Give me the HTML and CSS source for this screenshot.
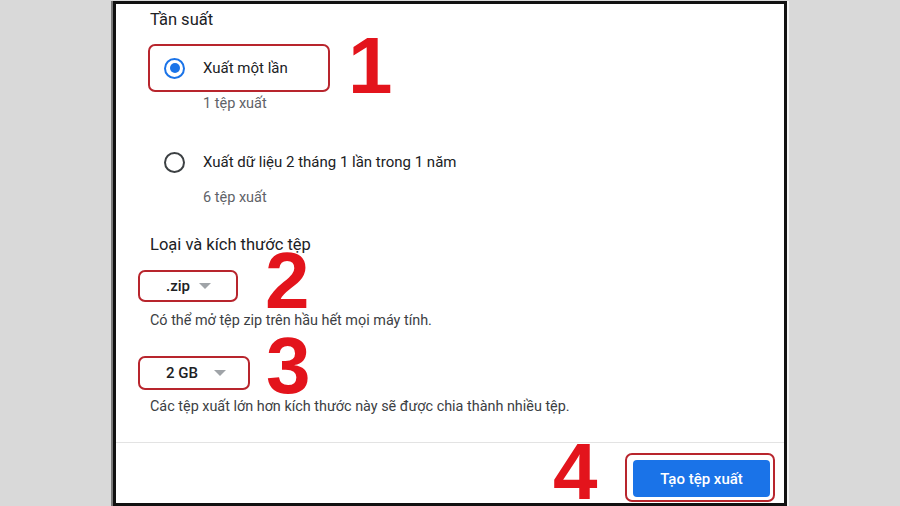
FILE: index.html
```html
<!DOCTYPE html>
<html lang="vi">
<head>
<meta charset="utf-8">
<link rel="stylesheet" href="styles.css">
</head>
<body>
<div class="panel">
  <div class="content">
    <div class="title t1">Tần suất</div>
    <div class="mark option-box">
      <span class="radio checked"></span>
      <span class="opt-label">Xuất một lần</span>
    </div>
    <div class="sub s1">1 tệp xuất</div>
    <div class="option o2">
      <span class="radio"></span>
      <span class="opt-label">Xuất dữ liệu 2 tháng 1 lần trong 1 năm</span>
    </div>
    <div class="sub s2">6 tệp xuất</div>
    <div class="title t2">Loại và kích thước tệp</div>
    <div class="mark select sel-zip"><span class="sel-text">.zip</span><span class="caret"></span></div>
    <div class="desc d1">Có thể mở tệp zip trên hầu hết mọi máy tính.</div>
    <div class="mark select sel-size"><span class="sel-text">2 GB</span><span class="caret"></span></div>
    <div class="desc d2">Các tệp xuất lớn hơn kích thước này sẽ được chia thành nhiều tệp.</div>
  </div>
  <div class="separator"></div>
  <div class="footer">
    <div class="mark btn-box"><button class="btn">Tạo tệp xuất</button></div>
  </div>
</div>
<span class="num n1">1</span>
<span class="num n2">2</span>
<span class="num n3">3</span>
<span class="num n4">4</span>
</body>
</html>
```
FILE: styles.css
```css
html, body {
  margin: 0;
  padding: 0;
}
body {
  width: 900px;
  height: 506px;
  background: #d9d9d9;
  position: relative;
  overflow: hidden;
  font-family: Roboto, "Liberation Sans", Arial, sans-serif;
  color: #202124;
}
.panel {
  box-sizing: border-box;
  margin-left: 113px;
  margin-top: 1px;
  width: 674px;
  height: 505px;
  border: 3px solid #111;
  background: #fff;
  box-shadow: -2px 0 0 #7a7a7a, 2px 0 0 #f2f2f2;
  display: flex;
  flex-direction: column;
}
.content {
  padding-left: 34px;
  display: flex;
  flex-direction: column;
  align-items: flex-start;
}
.title {
  font-size: 16.5px;
  line-height: 20px;
  height: 20px;
  color: #202124;
}
.t1 { margin-top: 6px; }
.t2 { margin-top: 27px; }
.mark {
  box-sizing: border-box;
  border: 2px solid #b8252d;
  border-radius: 7px;
}
.option-box {
  margin-top: 14px;
  margin-left: -2px;
  width: 182px;
  height: 48px;
  display: flex;
  align-items: center;
  padding-left: 14px;
}
.option {
  display: flex;
  align-items: center;
  height: 24px;
  padding-left: 14px;
}
.o2 { margin-top: 36px; }
.radio {
  box-sizing: border-box;
  width: 21px;
  height: 21px;
  border: 2px solid #3c4043;
  border-radius: 50%;
  flex: none;
  display: flex;
  align-items: center;
  justify-content: center;
}
.radio.checked {
  border-color: #1a73e8;
}
.radio.checked::after {
  content: "";
  width: 10px;
  height: 10px;
  border-radius: 50%;
  background: #1a73e8;
}
.opt-label {
  margin-left: 18px;
  font-size: 15px;
  color: #202124;
}
.sub {
  font-size: 14.5px;
  line-height: 20px;
  height: 20px;
  padding-left: 53px;
  color: #5f6368;
}
.s1 { margin-top: 2px; }
.s2 { margin-top: 14px; }
.select {
  display: flex;
  align-items: center;
  margin-left: -12px;
}
.sel-zip {
  margin-top: 15px;
  width: 100px;
  height: 32px;
}
.sel-size {
  margin-top: 25px;
  width: 112px;
  height: 34px;
}
.sel-text {
  margin-left: 26px;
  font-size: 15px;
  font-weight: 500;
  color: #202124;
}
.caret {
  width: 0;
  height: 0;
  border-left: 6px solid transparent;
  border-right: 6px solid transparent;
  border-top: 6px solid #a0a4a8;
}
.sel-zip .caret { margin-left: 9px; }
.sel-size .caret { margin-left: 16px; }
.desc {
  font-size: 14.4px;
  line-height: 20px;
  height: 20px;
  color: #3c4043;
}
.d1 { margin-top: 9px; }
.d2 { margin-top: 7px; }
.separator {
  margin-top: 25px;
  height: 1px;
  background: #e3e3e3;
}
.footer {
  flex: 1;
  display: flex;
  justify-content: flex-end;
  align-items: flex-start;
  padding-top: 10px;
  padding-right: 9px;
}
.btn-box {
  width: 150px;
  height: 49px;
  padding: 5px 3px 3px 6px;
}
.btn {
  display: block;
  width: 137px;
  height: 37px;
  border: none;
  border-radius: 4px;
  background: #1a73e8;
  color: #fff;
  font-family: Roboto, "Liberation Sans", Arial, sans-serif;
  font-size: 15px;
  font-weight: 500;
  padding: 0;
}
.num {
  position: absolute;
  font-family: "Liberation Sans", Arial, sans-serif;
  font-weight: 700;
  font-size: 80px;
  line-height: 58px;
  height: 58px;
  color: #e3141c;
}
.n1 { left: 348px; top: 37px; }
.n2 { left: 265px; top: 252px; }
.n3 { left: 266px; top: 337px; }
.n4 { left: 553px; top: 443px; }
```
